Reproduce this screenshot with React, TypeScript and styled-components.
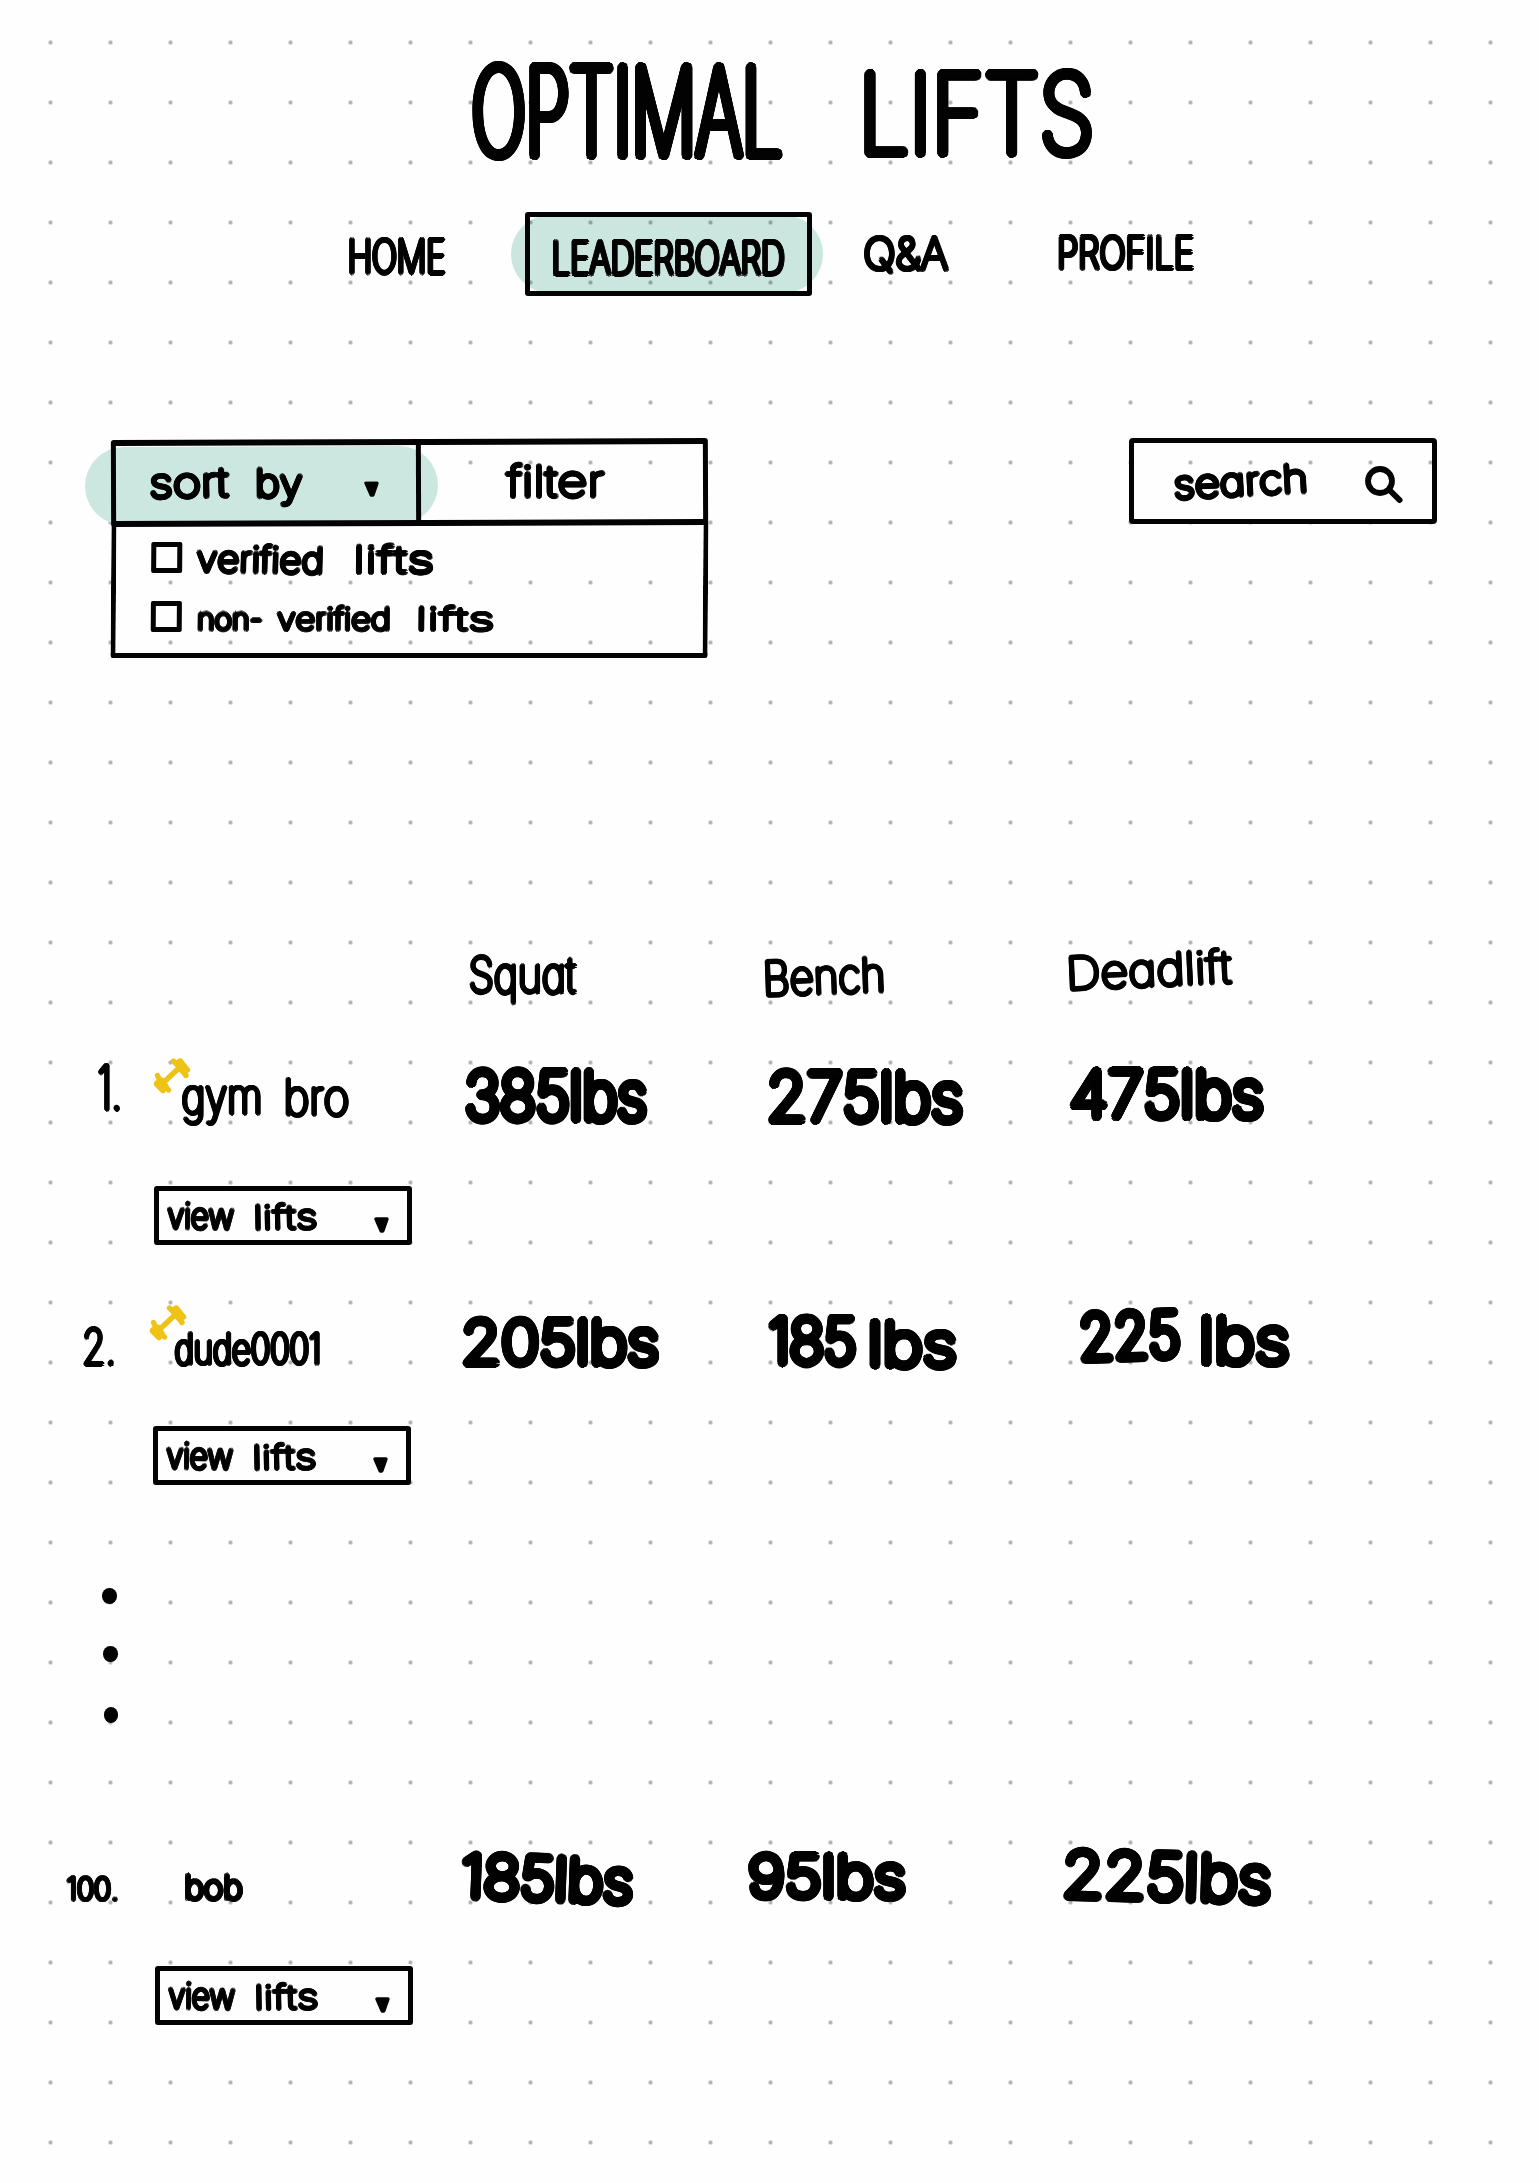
import React from "react";
import styled, { createGlobalStyle, css } from "styled-components";

const INK = "#030303";
const MINT = "#cce7df";
const GOLD = "#efc316";
const FONT = 'Inter, "Open Sans", "Liberation Sans", sans-serif';
const WEIGHT = 100;

const GlobalStyle = createGlobalStyle`
  html, body { margin: 0; padding: 0; background: #fefefe; }
  *, *::before { box-sizing: border-box; }
`;

/* ---------- marker lettering ---------- */

type Metric = "cap" | "asc" | "x";
const METRICS: Record<Metric, number> = { cap: 0.727, asc: 0.756, x: 0.546 };
const BASELINE = 0.864;

const InkBox = styled.span<{ $w: number; $h: number; $l: number; $t: number; $tilt: number }>`
  display: block;
  flex: none;
  width: ${(p) => p.$w}px;
  height: ${(p) => p.$h}px;
  margin-left: ${(p) => p.$l}px;
  margin-top: ${(p) => p.$t}px;
  transform: rotate(${(p) => p.$tilt}deg);
`;

const InkText = styled.span`
  display: block;
  width: max-content;
  white-space: nowrap;
  line-height: 1;
  font-family: ${FONT};
  font-weight: ${WEIGHT};
  font-feature-settings: "cv11" 1;
  font-kerning: none;
  transform-origin: 0 0;
  color: ${INK};
`;

const canvas = document.createElement("canvas").getContext("2d")!;

function inkExtent(text: string, size: number) {
  canvas.font = `${WEIGHT} ${size}px ${FONT}`;
  canvas.fontKerning = "none";
  const m = canvas.measureText(text);
  return { left: m.actualBoundingBoxLeft, width: m.actualBoundingBoxLeft + m.actualBoundingBoxRight };
}

/* A round pen tip: the thin letter is thickened evenly in every direction,
   ring by ring, so that no gap stays between the hairline and the rim. */
function penTip(r: number, scale: number) {
  const out: string[] = [];
  const rings = Math.ceil(r / 0.9);
  for (let ring = rings; ring > 0; ring--) {
    const d = (r * ring) / rings;
    const n = Math.max(8, Math.ceil(d * 5));
    for (let i = 0; i < n; i++) {
      const a = (i / n) * Math.PI * 2;
      out.push(`${((Math.cos(a) * d) / scale).toFixed(2)}px ${(Math.sin(a) * d).toFixed(2)}px 0 ${INK}`);
    }
  }
  return out.join(",");
}

interface InkProps {
  children: string;
  w: number;
  h: number;
  l?: number;
  t?: number;
  pen?: number;
  fit?: Metric;
  tilt?: number;
}

function Ink({ children, w, h, l = 0, t = 0, pen = 2, fit = "cap", tilt = 0 }: InkProps) {
  const size = (h - pen * 2) / METRICS[fit];
  const { left, width } = inkExtent(children, size);
  const scale = (w - pen * 2) / width;
  return (
    <InkBox $w={w} $h={h} $l={l} $t={t} $tilt={tilt}>
      <InkText
        style={{
          fontSize: size,
          transform: `translate(${pen + left * scale}px, ${h - pen - BASELINE * size}px) scaleX(${scale})`,
          textShadow: penTip(pen, scale),
        }}
      >
        {children}
      </InkText>
    </InkBox>
  );
}

/* ---------- page ---------- */

const Page = styled.main`
  width: 1539px;
  height: 2183px;
  overflow: hidden;
  isolation: isolate;
  background-color: #fefefe;
  background-image: radial-gradient(circle at 30px 30px, #b1b1b1 1.6px, rgba(177, 177, 177, 0) 2.4px);
  background-size: 60px 60px;
  background-position: 20.5px 12.5px;
`;

const Title = styled.h1`
  display: flex;
  align-items: flex-start;
  height: 212px;
  margin: 0;
  padding: 63px 0 0 472px;
`;

const Nav = styled.nav`
  display: flex;
  align-items: flex-start;
  height: 84px;
  padding-left: 349px;
`;

const highlight = css<{ $left: number; $right: number; $top: number; $bottom: number }>`
  position: relative;
  &::before {
    content: "";
    position: absolute;
    z-index: -1;
    left: ${(p) => p.$left}px;
    right: ${(p) => p.$right}px;
    top: ${(p) => p.$top}px;
    bottom: ${(p) => p.$bottom}px;
    border-radius: 40px;
    background: ${MINT};
    mix-blend-mode: multiply;
  }
`;

const ActiveTab = styled.div`
  ${highlight}
  display: flex;
  align-items: flex-start;
  width: 287px;
  height: 84px;
  margin-left: 79px;
  border: 5px solid ${INK};
  border-radius: 3px;
`;

const Toolbar = styled.section`
  display: flex;
  align-items: flex-start;
  height: 220px;
  margin-top: 142px;
  padding-left: 111px;
`;

const Panel = styled.div`
  width: 597px;
`;

const PanelHead = styled.div`
  display: flex;
  height: 87px;
  margin-top: 1px;
  border: solid ${INK};
  border-width: 6px 5px;
  border-radius: 3px;
  rotate: -0.2deg;
`;

const SortCell = styled.div`
  ${highlight}
  display: flex;
  align-items: flex-start;
  width: 305px;
  border-right: 5px solid ${INK};
`;

const FilterCell = styled.div`
  display: flex;
  align-items: flex-start;
  flex: 1;
`;

const PanelBody = styled.div`
  display: flex;
  flex-direction: column;
  width: 597px;
  height: 135px;
  margin-top: -3px;
  padding: 19px 0 0 35px;
  border: 5px solid ${INK};
  border-top: 0;
  border-radius: 0 0 3px 3px;
  transform: skewX(-0.4deg);
  transform-origin: 100% 50%;
`;

const Option = styled.label`
  display: flex;
  align-items: flex-start;
  height: 59px;
  flex: none;
`;

const Checkbox = styled.span`
  flex: none;
  width: 31px;
  height: 31px;
  border: 5px solid ${INK};
  border-radius: 2px;
`;

const SearchBox = styled.div`
  display: flex;
  align-items: flex-start;
  width: 308px;
  height: 86px;
  margin-left: 421px;
  border: 5.5px solid ${INK};
  border-radius: 4px;
`;

const SearchIcon = styled.svg`
  flex: none;
  width: 42px;
  height: 42px;
  margin: 20px 0 0 58px;
`;

const Caret = styled.svg<{ $l: number; $t: number }>`
  flex: none;
  width: 15px;
  height: 16px;
  margin-left: ${(p) => p.$l}px;
  margin-top: ${(p) => p.$t}px;
`;

const Board = styled.section`
  padding-top: 282px;
`;

const Columns = styled.div<{ $h: number }>`
  display: grid;
  grid-template-columns: 150px 310px 302px 300px 1fr;
  height: ${(p) => p.$h}px;
`;

const Cell = styled.div`
  position: relative;
  display: flex;
  align-items: flex-start;
`;

const Entry = styled.article`
  height: 190px;
  margin-bottom: 50px;
`;

const ViewButton = styled.div<{ $l: number }>`
  display: flex;
  align-items: flex-start;
  width: 258px;
  height: 59px;
  margin-left: ${(p) => p.$l}px;
  border: 5px solid ${INK};
  border-radius: 3px;
`;

const Badge = styled.svg<{ $l: number; $t: number }>`
  position: absolute;
  left: ${(p) => p.$l}px;
  top: ${(p) => p.$t}px;
  width: 38px;
  height: 36px;
`;

const More = styled.div`
  display: flex;
  flex-direction: column;
  align-items: flex-start;
  height: 300px;
  padding: 53px 0 0 102px;
`;

const MoreDot = styled.span<{ $gap: number; $l: number }>`
  width: 14.5px;
  height: 15.5px;
  flex: none;
  margin: 0 0 ${(p) => p.$gap}px ${(p) => p.$l}px;
  border-radius: 50%;
  background: ${INK};
`;

function DownCaret({ l, t }: { l: number; t: number }) {
  return (
    <Caret $l={l} $t={t} viewBox="0 0 15 16">
      <path d="M2 2H13L8.8 14H7.2Z" fill={INK} stroke={INK} strokeWidth="3.4" strokeLinejoin="round" />
    </Caret>
  );
}

function Dumbbell({ l, t }: { l: number; t: number }) {
  return (
    <Badge $l={l} $t={t} viewBox="0 0 38 36" fill="none" stroke={GOLD} strokeLinecap="round" strokeLinejoin="round">
      <path d="M10 25L27 9" strokeWidth="5.4" />
      <path d="M4.5 17.5L7 23L15.5 32M3.5 26L10 32.5" strokeWidth="5.4" />
      <path d="M3.5 25L9 22L13 28L9.5 32Z" fill={GOLD} strokeWidth="5" />
      <path d="M20.5 3L28 11L33 17.5M27 3L34.5 12" strokeWidth="5.4" />
      <path d="M23 5L27.5 3L34 12L29 13Z" fill={GOLD} strokeWidth="5" />
    </Badge>
  );
}

function ViewLifts({ l }: { l: number }) {
  return (
    <ViewButton $l={l}>
      <Ink w={69} h={24} l={7} t={17} pen={2.2} fit="x" tilt={1}>view</Ink>
      <Ink w={62} h={29} l={20} t={11} pen={2.2} fit="asc" tilt={-1}>lifts</Ink>
      <DownCaret l={57} t={26} />
    </ViewButton>
  );
}

interface EntryData {
  rank: InkProps;
  name: InkProps[];
  badge?: [number, number];
  lifts: InkProps[][];
  button: number;
}

const ENTRIES: EntryData[] = [
  {
    rank: { children: "1.", l: 98, t: 9, w: 22, h: 49, pen: 2.2 },
    name: [
      { children: "gym", l: 32, t: 31, w: 79, h: 31, pen: 2.2, fit: "x" },
      { children: "bro", l: 24, t: 21, w: 64, h: 42, pen: 2.2, fit: "asc" },
    ],
    badge: [3, 3],
    lifts: [
      [{ children: "385lbs", l: 5, t: 12, w: 183, h: 57, pen: 4.5 }],
      [{ children: "275lbs", l: 6, t: 13, w: 196, h: 57, pen: 4.5 }],
      [{ children: "475lbs", l: 7, t: 12, w: 196, h: 55, pen: 4.5 }],
    ],
    button: 154,
  },
  {
    rank: { children: "2.", l: 83, t: 33, w: 31, h: 40, pen: 2.2 },
    name: [{ children: "dude0001", l: 24, t: 36, w: 146, h: 36, pen: 2.3, fit: "asc" }],
    badge: [-1, 10],
    lifts: [
      [{ children: "205lbs", l: 2, t: 21, w: 198, h: 52, pen: 4.5 }],
      [
        { children: "185", l: 6, t: 19, w: 89, h: 54, pen: 4.5 },
        { children: "lbs", l: 12, t: 22, w: 88, h: 53, pen: 4.5, fit: "asc" },
      ],
      [
        { children: "225", l: 17, t: 14, w: 102, h: 54, pen: 4.5, tilt: -2 },
        { children: "lbs", l: 20, t: 17, w: 89, h: 56, pen: 4.5, fit: "asc" },
      ],
    ],
    button: 153,
  },
  {
    rank: { children: "100.", l: 66, t: 41, w: 52, h: 27, pen: 2.3 },
    name: [{ children: "bob", l: 35, t: 37, w: 59, h: 30, pen: 2.5, fit: "asc" }],
    lifts: [
      [{ children: "185lbs", l: 1, t: 19, w: 173, h: 51, pen: 4.5, tilt: 2 }],
      [{ children: "95lbs", l: -14, t: 17, w: 159, h: 50, pen: 4.5 }],
      [{ children: "225lbs", l: 1, t: 15, w: 209, h: 54, pen: 4.5, tilt: 1.5 }],
    ],
    button: 155,
  },
];

function EntryRow({ data }: { data: EntryData }) {
  return (
    <Entry>
      <Columns $h={131}>
        <Cell><Ink {...data.rank} /></Cell>
        <Cell>
          {data.badge && <Dumbbell l={data.badge[0]} t={data.badge[1]} />}
          {data.name.map((word, i) => <Ink key={i} {...word} />)}
        </Cell>
        {data.lifts.map((words, i) => (
          <Cell key={i}>{words.map((word, j) => <Ink key={j} {...word} />)}</Cell>
        ))}
      </Columns>
      <ViewLifts l={data.button} />
    </Entry>
  );
}

export default function App() {
  return (
    <Page>
      <GlobalStyle />
      <Title>
        <Ink w={311} h={98} pen={4.5}>OPTIMAL</Ink>
        <Ink w={228} h={89} l={81} t={6} pen={4.5}>LIFTS</Ink>
      </Title>

      <Nav>
        <Ink w={97} h={38} t={26} pen={2.4}>HOME</Ink>
        <ActiveTab $left={-19} $right={-16} $top={-2} $bottom={-2}>
          <Ink w={232} h={37} l={23} t={23} pen={2.4}>LEADERBOARD</Ink>
        </ActiveTab>
        <Ink w={86} h={36} l={52} t={24} pen={2.4}>{"Q&A"}</Ink>
        <Ink w={136} h={36} l={108} t={23} pen={2.4}>PROFILE</Ink>
      </Nav>

      <Toolbar>
        <Panel>
          <PanelHead>
            <SortCell $left={-31} $right={-22} $top={1} $bottom={-4}>
              <Ink w={81} h={34} l={33} t={20} pen={2.5} tilt={-1}>sort</Ink>
              <Ink w={47} h={34} l={26} t={20} pen={2.5} fit="asc">by</Ink>
              <DownCaret l={61} t={36} />
            </SortCell>
            <FilterCell>
              <Ink w={102} h={37} l={83} t={18} pen={2.5} fit="asc">filter</Ink>
            </FilterCell>
          </PanelHead>
          <PanelBody>
            <Option>
              <Checkbox />
              <Ink w={128} h={32} l={13} t={1} pen={2.4} fit="asc" tilt={1}>verified</Ink>
              <Ink w={79} h={32} l={32} t={1} pen={2.4} fit="asc">lifts</Ink>
            </Option>
            <Option>
              <Checkbox />
              <Ink w={66} h={21} l={15} t={10} pen={2.3} fit="x">non-</Ink>
              <Ink w={114} h={28} l={13} t={4} pen={2.3} fit="asc">verified</Ink>
              <Ink w={78} h={28} l={27} t={4} pen={2.3} fit="asc">lifts</Ink>
            </Option>
          </PanelBody>
        </Panel>
        <SearchBox>
          <Ink w={131} h={34} l={39} t={21} pen={2.5} fit="asc" tilt={-3}>search</Ink>
          <SearchIcon viewBox="0 0 42 42" fill="none" stroke={INK} strokeLinecap="round">
            <circle cx="18" cy="18" r="12" strokeWidth="5.8" />
            <path d="M27.5 27L37.5 37" strokeWidth="6" />
          </SearchIcon>
        </SearchBox>
      </Toolbar>

      <Board>
        <Columns $h={115}>
          <Cell />
          <Cell />
          <Cell><Ink w={106} h={40} l={9} t={16} pen={2.2}>Squat</Ink></Cell>
          <Cell><Ink w={119} h={39} l={3} t={17} pen={2.2} tilt={-2}>Bench</Ink></Cell>
          <Cell><Ink w={161} h={37} l={7} t={12} pen={2.2} tilt={-2.5}>Deadlift</Ink></Cell>
        </Columns>
        <EntryRow data={ENTRIES[0]} />
        <EntryRow data={ENTRIES[1]} />
        <More>
          <MoreDot $l={0} $gap={42.5} />
          <MoreDot $l={1} $gap={45.5} />
          <MoreDot $l={1.5} $gap={0} />
        </More>
        <EntryRow data={ENTRIES[2]} />
      </Board>
    </Page>
  );
}
